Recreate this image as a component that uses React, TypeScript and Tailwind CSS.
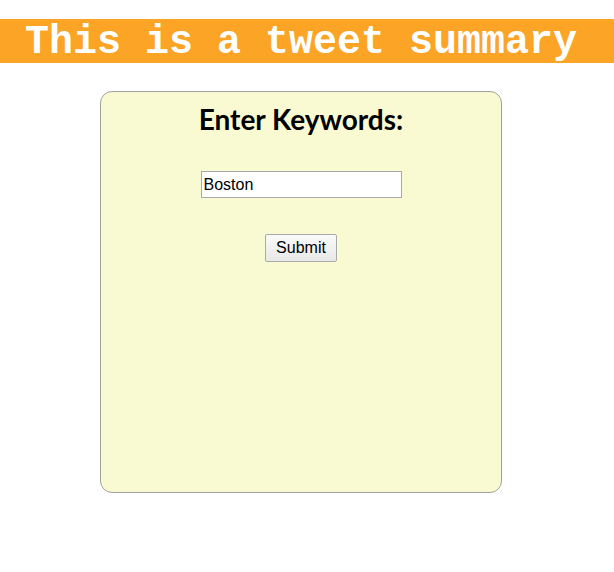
import React from 'react';

export default function App() {
  return (
    <div className="min-h-[572px] bg-white pt-[19px]">
      <h1 className="h-[44px] bg-[#fca426] pl-[25px] pt-[2px] text-[40px] leading-[44px] font-bold text-white whitespace-nowrap [font-family:'Liberation_Mono',monospace]">
        This is a tweet summary
      </h1>

      <div className="mt-[28px] ml-[100px] w-[402px] h-[402px] rounded-[12px] border border-[#a0a0a0] bg-[#fafad2] flex flex-col items-center">
        <h2 className="mt-[11px] text-[28px] leading-[32px] font-bold text-black [font-family:Lato,sans-serif]">
          Enter Keywords:
        </h2>
        <input
          type="text"
          defaultValue="Boston"
          className="mt-[36px] w-[201px] h-[27px] bg-white border border-[#a9a9a9] px-[2px] text-[16px] text-black outline-none [font-family:'Liberation_Sans',Arial,sans-serif]"
        />
        <button className="mt-[36px] h-[28px] px-[10px] border border-[#a9a9a9] rounded-[2px] bg-gradient-to-b from-[#fafafa] to-[#e8e8e8] text-[16px] text-black [font-family:'Liberation_Sans',Arial,sans-serif]">
          Submit
        </button>
      </div>
    </div>
  );
}
